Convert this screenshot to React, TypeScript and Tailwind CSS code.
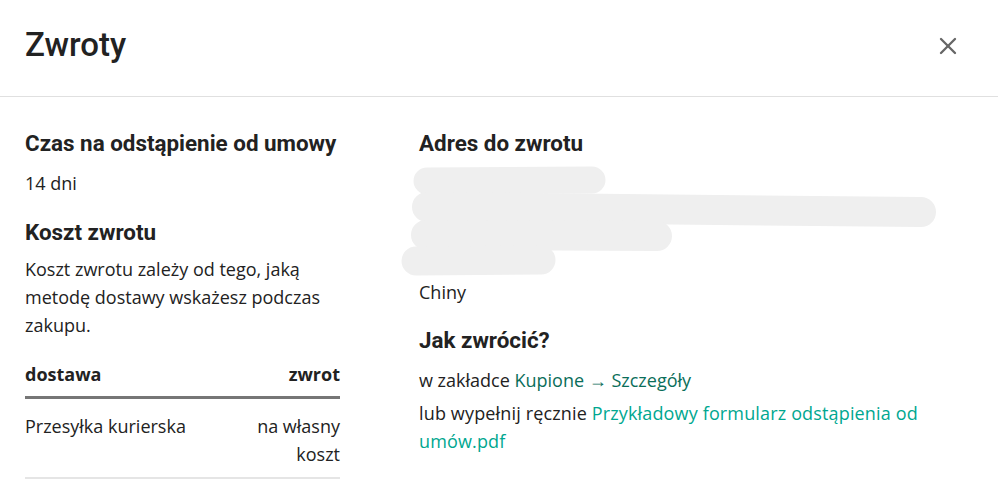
import { X } from 'lucide-react';

const heading = "font-['Roboto',sans-serif] text-[22.4px] leading-[28px] font-bold text-[#222]";
const body = "font-['Open_Sans',sans-serif] text-[18px] leading-[28px] text-[#222]";

function Redacted() {
  // grey marker strokes hiding the address lines
  return (
    <svg width="540" height="116" viewBox="0 0 540 116" className="block -ml-[10px] overflow-visible">
      <g stroke="#efefef" strokeLinecap="round" fill="none">
        <line x1="18" y1="19" x2="183" y2="18" strokeWidth="27" />
        <line x1="18" y1="45" x2="512" y2="50" strokeWidth="30" />
        <line x1="17" y1="73" x2="248" y2="74" strokeWidth="30" />
        <line x1="7" y1="99" x2="132" y2="98" strokeWidth="29" />
      </g>
    </svg>
  );
}

export default function App() {
  return (
    <div className="w-[998px] h-[482px] bg-white overflow-hidden">
      <div className="h-[97px] flex items-center justify-between pl-[25px] pr-[36px] border-b border-[#e0e0e0]">
        <h1 className="font-['Roboto',sans-serif] text-[33px] font-medium text-[#222] -mt-[6px]">Zwroty</h1>
        <X className="w-[28px] h-[28px] text-[#666] -mt-[4px]" strokeWidth={2} />
      </div>

      <div className="flex pl-[25px] pt-[32px]">
        <div className="w-[315px]">
          <h2 className={heading}>Czas na odstąpienie od umowy</h2>
          <p className={`${body} mt-[12px]`}>14 dni</p>
          <h2 className={`${heading} mt-[21px]`}>Koszt zwrotu</h2>
          <p className={`${body} mt-[9px]`}>
            Koszt zwrotu zależy od tego, jaką metodę dostawy wskażesz podczas zakupu.
          </p>

          <div className={`${body} mt-[21px]`}>
            <div className="flex justify-between font-bold pb-[8px] border-b-[3px] border-[#767676]">
              <span>dostawa</span>
              <span>zwrot</span>
            </div>
            <div className="flex justify-between pt-[13px] pb-[9px] border-b-2 border-[#e5e5e5]">
              <span>Przesyłka kurierska</span>
              <span className="w-[100px] text-right">na własny koszt</span>
            </div>
          </div>
        </div>

        <div className="ml-[79px] w-[520px]">
          <h2 className={heading}>Adres do zwrotu</h2>
          <div className="mt-[5px]">
            <Redacted />
          </div>
          <p className={body}>Chiny</p>
          <h2 className={`${heading} mt-[20px]`}>Jak zwrócić?</h2>
          <div className={`${body} mt-[12px] flex flex-col gap-[5px]`}>
            <p>
              w zakładce <span className="text-[#0b6e5a]">Kupione → Szczegóły</span>
            </p>
            <p className="tracking-[0.15px]">
              lub wypełnij ręcznie{' '}
              <span className="text-[#00a790]">Przykładowy formularz odstąpienia od</span>{' '}
              <span className="text-[#00a790]">umów.pdf</span>
            </p>
          </div>
        </div>
      </div>
    </div>
  );
}
